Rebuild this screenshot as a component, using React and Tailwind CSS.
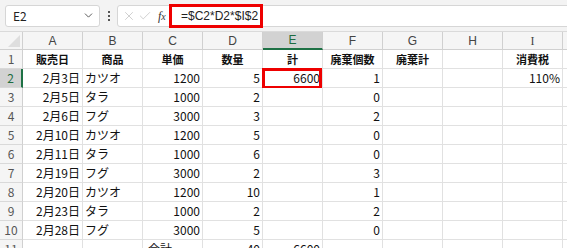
import { ChevronDown, X, Check } from 'lucide-react'

const cols = ['A', 'B', 'C', 'D', 'E', 'F', 'G', 'H', 'I']

const rows = [
  ['2月3日', 'カツオ', '1200', '5', '6600', '1', '', '', '110%'],
  ['2月5日', 'タラ', '1000', '2', '', '0', '', '', ''],
  ['2月6日', 'フグ', '3000', '3', '', '2', '', '', ''],
  ['2月10日', 'カツオ', '1200', '5', '', '0', '', '', ''],
  ['2月11日', 'タラ', '1000', '6', '', '0', '', '', ''],
  ['2月19日', 'フグ', '3000', '2', '', '3', '', '', ''],
  ['2月20日', 'カツオ', '1200', '10', '', '1', '', '', ''],
  ['2月23日', 'タラ', '1000', '2', '', '2', '', '', ''],
  ['2月28日', 'フグ', '3000', '5', '', '0', '', '', ''],
]

const heads = ['販売日', '商品', '単価', '数量', '計', '廃棄個数', '廃棄計', '', '消費税']

function Cell({ children, align = 'right', bold = false, sel = false }) {
  const a =
    align === 'right' ? 'justify-end pr-[2px]' : align === 'center' ? 'justify-center' : 'justify-start pl-[2px]'
  return (
    <div
      className={`relative flex items-center h-[19px] border-r border-b border-[#e1e1e1] bg-white text-[#111] ${a} ${
        bold ? 'font-bold' : ''
      }`}
    >
      {children}
      {sel && (
        <div className="absolute -left-[1px] -top-[1px] right-0 -bottom-[2px] border-[3px] border-[#ee0000]" />
      )}
    </div>
  )
}

function RowHead({ n, active }) {
  return (
    <div
      className={`flex items-center justify-center h-[19px] border-b border-[#d9d9d9] text-[12px] ${
        active ? 'bg-[#d2d2d2] text-[#1e6c41] border-r-2 border-r-[#1e7145]' : 'bg-[#f5f5f5] text-[#555] border-r border-r-[#d0d0d0]'
      }`}
    >
      {n}
    </div>
  )
}

export default function App() {
  return (
    <div
      className="w-[567px] h-[248px] overflow-hidden bg-white text-[12px]"
      style={{ fontFamily: '"Noto Sans CJK JP", "Liberation Sans", sans-serif' }}
    >
      {/* formula bar */}
      <div className="h-[32px] bg-[#f3f3f3] flex items-center pl-[5px] border-b border-[#dadada]">
        <div className="w-[95px] h-[22px] bg-white border border-[#d6d6d6] rounded-[3px] flex items-center justify-between pl-[7px] pr-[4px] text-[#222] text-[12px]">
          <span>E2</span>
          <ChevronDown size={13} strokeWidth={1.6} className="text-[#444]" />
        </div>
        <div className="w-[17px] flex flex-col items-center gap-[2px]">
          <span className="w-[2px] h-[2px] bg-[#555]" />
          <span className="w-[2px] h-[2px] bg-[#555]" />
          <span className="w-[2px] h-[2px] bg-[#555]" />
        </div>
        <div className="w-[54px] h-[22px] bg-white border border-[#d6d6d6] rounded-l-[3px] flex items-center pl-[4px] gap-[2px] text-[#bbb]">
          <X size={14} strokeWidth={1.2} />
          <Check size={14} strokeWidth={1.2} />
          <span className="ml-[4px] text-[#333] italic text-[12px]" style={{ fontFamily: '"Liberation Serif", serif' }}>
            f<span className="text-[10px]">x</span>
          </span>
        </div>
        <div className="flex-1 h-[22px] bg-white border-y border-[#d6d6d6] flex items-center relative">
          <div className="absolute -left-[2px] -top-[2px] w-[94px] -bottom-[2px] border-[3px] border-[#ee0000]" />
          <span className="pl-[10px] text-[12px] text-[#222]" style={{ fontFamily: '"Liberation Sans", sans-serif' }}>
            =$C2*D2*$I$2
          </span>
        </div>
      </div>

      {/* grid */}
      <div className="grid grid-cols-[23px_repeat(9,60px)_1fr]">
        <div className="h-[18px] bg-[#f5f5f5] border-r border-b border-[#d0d0d0] relative overflow-hidden">
          <div className="absolute right-[2px] bottom-[2px] w-0 h-0 border-l-[12px] border-l-transparent border-b-[12px] border-b-[#dedede]" />
        </div>
        {cols.map((c) => (
          <div
            key={c}
            className={`h-[18px] flex items-center justify-center text-[12px] border-r ${
              c === 'E'
                ? 'bg-[#d2d2d2] text-[#1e6c41] border-b-2 border-b-[#1e7145] border-r-[#d0d0d0]'
                : 'bg-[#f5f5f5] text-[#444] border-b border-[#d0d0d0]'
            }`}
            style={{ fontFamily: '"Liberation Serif", serif' }}
          >
            <span style={{ fontFamily: c === 'I' ? '"Liberation Serif", serif' : '"Liberation Sans", sans-serif' }}>{c}</span>
          </div>
        ))}
        <div className="h-[18px] bg-[#f5f5f5] border-b border-[#d0d0d0]" />

        <RowHead n={1} />
        {heads.map((h, i) => (
          <Cell key={i} align="center" bold>
            <span className="text-[11px]">{h}</span>
          </Cell>
        ))}
        <div className="h-[19px] border-b border-[#e1e1e1]" />

        {rows.map((r, ri) => (
          <div key={ri} className="contents">
            <RowHead n={ri + 2} active={ri === 0} />
            {r.map((v, ci) => (
              <Cell key={ci} align={ci === 1 ? 'left' : 'right'} sel={ri === 0 && ci === 4}>
                {v}
              </Cell>
            ))}
            <div className="h-[19px] border-b border-[#e1e1e1]" />
          </div>
        ))}

        <RowHead n={11} />
        <Cell />
        <Cell />
        <Cell align="left">
          <span className="pl-[3px]">合計</span>
        </Cell>
        <Cell>40</Cell>
        <Cell>6600</Cell>
        <Cell />
        <Cell />
        <Cell />
        <Cell />
        <div className="h-[19px]" />
      </div>
    </div>
  )
}
